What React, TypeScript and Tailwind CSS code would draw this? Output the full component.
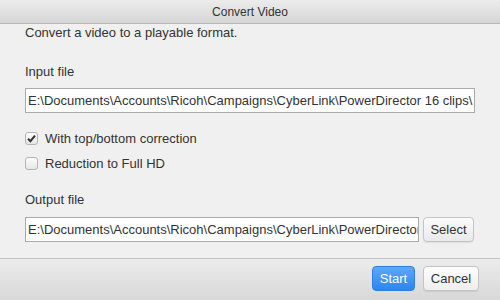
import { useState } from "react";

const inputPath =
  "E:\\Documents\\Accounts\\Ricoh\\Campaigns\\CyberLink\\PowerDirector 16 clips\\";

function Check({ checked, onChange, label }: { checked: boolean; onChange: () => void; label: string }) {
  return (
    <label className="flex items-center h-[25px] cursor-pointer" onClick={onChange}>
      <span className="w-[13px] h-[13px] rounded-[3px] border border-[#b5b5b5] bg-gradient-to-b from-[#fdfdfd] to-[#e6e6e6] flex items-center justify-center">
        {checked && (
          <svg width="9" height="9" viewBox="0 0 9 9">
            <path d="M1 4.8 L3.4 7.2 L8 1.6" fill="none" stroke="#333" strokeWidth="2" />
          </svg>
        )}
      </span>
      <span className="ml-[7px]">{label}</span>
    </label>
  );
}

export default function App() {
  const [topBottom, setTopBottom] = useState(true);
  const [fullHd, setFullHd] = useState(false);

  return (
    <div className="w-[500px] h-[300px] flex flex-col bg-[#f0f0f0] text-[#333] text-[13px] font-['Liberation_Sans',Arial,sans-serif] overflow-hidden">
      <div className="h-[24px] shrink-0 flex items-center justify-center bg-gradient-to-b from-[#ececec] to-[#d6d6d6] border-b border-[#b8b8b8] text-[12px]">
        Convert Video
      </div>

      <div className="flex-1 flex flex-col px-[25px]">
        <div className="h-[18px] flex items-center">Convert a video to a playable format.</div>

        <div className="mt-[20px] h-[20px] flex items-center">Input file</div>
        <div className="mt-[6px] h-[25px] border border-[#aaa] bg-white flex items-center px-[2px] overflow-hidden whitespace-nowrap">
          {inputPath}
        </div>

        <div className="mt-[13px]">
          <Check checked={topBottom} onChange={() => setTopBottom((v) => !v)} label="With top/bottom correction" />
          <Check checked={fullHd} onChange={() => setFullHd((v) => !v)} label="Reduction to Full HD" />
        </div>

        <div className="mt-[14px] h-[20px] flex items-center">Output file</div>
        <div className="mt-[7px] flex gap-[4px]">
          <div className="w-[394px] h-[25px] border border-[#aaa] bg-white flex items-center px-[2px] overflow-hidden whitespace-nowrap">
            {inputPath}
          </div>
          <button className="w-[51px] h-[25px] rounded-[4px] border border-[#c4c4c4] bg-gradient-to-b from-[#fbfbfb] to-[#e9e9e9] shadow-[0_1px_1px_rgba(0,0,0,0.08)]">
            Select
          </button>
        </div>
      </div>

      <div className="h-[42px] shrink-0 border-t border-[#c4c4c4] bg-gradient-to-b from-[#ececec] to-[#d8d8d8] flex items-start justify-end gap-[8px] pt-[7px] pr-[21px]">
        <button className="w-[43px] h-[25px] rounded-[4px] border border-[#2f7fe0] bg-gradient-to-b from-[#5aa8ff] to-[#2a85f0] text-white">
          Start
        </button>
        <button className="w-[56px] h-[25px] rounded-[4px] border border-[#c4c4c4] bg-gradient-to-b from-[#fdfdfd] to-[#eeeeee] shadow-[0_1px_1px_rgba(0,0,0,0.08)]">
          Cancel
        </button>
      </div>
    </div>
  );
}
